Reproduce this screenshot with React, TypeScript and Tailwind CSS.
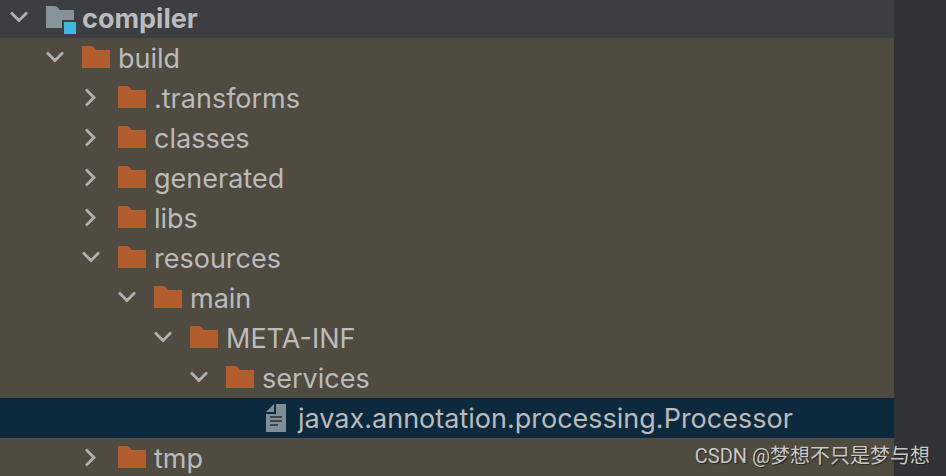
import { useState } from "react";

type IconKind = "module" | "folder" | "file";

interface TreeNode {
  name: string;
  icon: IconKind;
  open?: boolean;
  children?: TreeNode[];
}

const project: TreeNode = {
  name: "compiler",
  icon: "module",
  open: true,
  children: [
    {
      name: "build",
      icon: "folder",
      open: true,
      children: [
        { name: ".transforms", icon: "folder", children: [] },
        { name: "classes", icon: "folder", children: [] },
        { name: "generated", icon: "folder", children: [] },
        { name: "libs", icon: "folder", children: [] },
        {
          name: "resources",
          icon: "folder",
          open: true,
          children: [
            {
              name: "main",
              icon: "folder",
              open: true,
              children: [
                {
                  name: "META-INF",
                  icon: "folder",
                  open: true,
                  children: [
                    {
                      name: "services",
                      icon: "folder",
                      open: true,
                      children: [
                        { name: "javax.annotation.processing.Processor", icon: "file" },
                      ],
                    },
                  ],
                },
              ],
            },
          ],
        },
        { name: "tmp", icon: "folder", children: [] },
      ],
    },
  ],
};

function Chevron({ open }: { open: boolean }) {
  return (
    <svg viewBox="0 0 32 32" className="size-8" fill="none" stroke="#afb1b3" strokeWidth="2.8" aria-hidden="true">
      <path d={open ? "M8 11.5 L16 19.5 L24 11.5" : "M11 8.5 L19 16.5 L11 24.5"} />
    </svg>
  );
}

function NodeIcon({ kind }: { kind: IconKind }) {
  return (
    <svg viewBox="0 0 32 32" className="size-8 shrink-0" aria-hidden="true">
      {kind === "folder" && (
        <path fill="#b35c2e" d="M2 4 H10.5 C12.5 4 13.5 5.2 14.5 6.6 L15.8 8 H30 V26 H2 Z" />
      )}
      {kind === "module" && (
        <>
          <path fill="#87939a" d="M2 4 H10.5 C12.5 4 13.5 5.2 14.5 6.6 L15.8 8 H30 V18 H18 V26 H2 Z" />
          <path fill="#40b6e0" d="M20 20 H32 V32 H20 Z" />
        </>
      )}
      {kind === "file" && (
        <>
          <path fill="#7f8f98" d="M14 2 V10 H6 Z M16 2 H26 V30 H6 V12 H16 Z" />
          <path fill="#3f4547" d="M10 14 H22 V16 H10 Z M10 18 H22 V20 H10 Z M10 22 H18 V24 H10 Z" />
        </>
      )}
    </svg>
  );
}

function Branch({ node, level }: { node: TreeNode; level: number }) {
  const [open, setOpen] = useState(Boolean(node.open));
  const root = level === 0;
  const rowStyle = root
    ? "h-[38px] bg-[#3c3f41] pb-0.5 font-bold"
    : node.icon === "file"
      ? "h-10 bg-[#0d293e]"
      : "h-10";

  return (
    <li role="treeitem" aria-expanded={node.children ? open : undefined} aria-selected={node.icon === "file"}>
      <button
        type="button"
        onClick={() => setOpen(!open)}
        className={`flex w-full items-center text-left ${rowStyle}`}
        style={{ paddingLeft: level * 36 + 3 }}
      >
        <span className="mr-[9px] -mt-0.5 size-8 shrink-0">{node.children && <Chevron open={open} />}</span>
        <NodeIcon kind={node.icon} />
        <span className="ml-1.5 pt-0.5 leading-8 whitespace-nowrap">{node.name}</span>
      </button>
      {open && node.children && node.children.length > 0 && (
        <ul role="group">
          {node.children.map((child) => (
            <Branch key={child.name} node={child} level={level + 1} />
          ))}
        </ul>
      )}
    </li>
  );
}

export default function App() {
  return (
    <main className="relative flex h-screen overflow-hidden bg-[#313335] font-['Inter','Liberation_Sans',sans-serif] text-[27px] text-[#bbbbbb]">
      <ul role="tree" aria-label="Project" className="min-w-0 flex-1 bg-[#4f4b41]">
        <Branch node={project} level={0} />
      </ul>
      <aside className="w-[52px] shrink-0" />
      <p className="absolute right-4 bottom-1.5 font-['Roboto','Noto_Sans_CJK_SC',sans-serif] text-xl leading-7 whitespace-nowrap text-[#c8c8c6] [text-shadow:1px_1px_1px_#222]">
        CSDN @梦想不只是梦与想
      </p>
    </main>
  );
}
